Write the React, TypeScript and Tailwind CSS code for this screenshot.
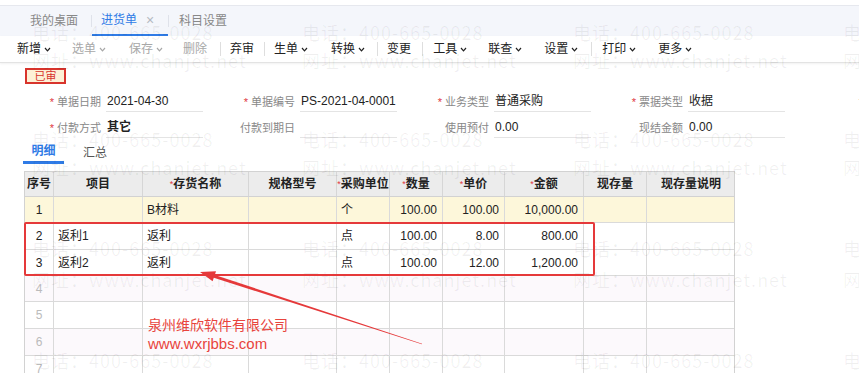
import React from 'react';

const Chevron = () => (
  <svg width="7" height="5" viewBox="0 0 7 5" className="ml-[3px]">
    <polyline points="1,1 3.5,3.8 6,1" fill="none" stroke="currentColor" strokeWidth="1.2" />
  </svg>
);

// toolbar items: label, has chevron, disabled, left margin
const toolbar = [
  { t: '新增', c: true, d: false, ml: 'ml-0' },
  { t: '选单', c: true, d: true, ml: 'ml-[21px]' },
  { t: '保存', c: true, d: true, ml: 'ml-[23px]' },
  { t: '删除', c: false, d: true, ml: 'ml-[20px]' },
  { t: '|', c: false, d: false, ml: 'ml-[13px]' },
  { t: '弃审', c: false, d: false, ml: 'ml-[9px]' },
  { t: '|', c: false, d: false, ml: 'ml-[10px]' },
  { t: '生单', c: true, d: false, ml: 'ml-[9px]' },
  { t: '转换', c: true, d: false, ml: 'ml-[23px]' },
  { t: '|', c: false, d: false, ml: 'ml-[12px]' },
  { t: '变更', c: false, d: false, ml: 'ml-[9px]' },
  { t: '|', c: false, d: false, ml: 'ml-[11px]' },
  { t: '工具', c: true, d: false, ml: 'ml-[10px]' },
  { t: '联查', c: true, d: false, ml: 'ml-[21px]' },
  { t: '设置', c: true, d: false, ml: 'ml-[22px]' },
  { t: '|', c: false, d: false, ml: 'ml-[13px]' },
  { t: '打印', c: true, d: false, ml: 'ml-[10px]' },
  { t: '更多', c: true, d: false, ml: 'ml-[22px]' },
];

const Field = ({ label, value, req, bold }: { label: string; value?: string; req?: boolean; bold?: boolean }) => (
  <div className="flex items-center w-[194px] shrink-0">
    <div className="w-[95px] flex justify-end items-center text-[11px] text-[#888]">
      {req && <span className="text-[#e0383e] mr-[3px] text-[11px]">*</span>}
      {label}
    </div>
    <div className={`ml-[5px] w-[100px] h-[20px] border-b border-[#e4e4e4] pl-[1px] leading-[19px] text-[12px] text-[#222] ${bold ? 'font-semibold' : ''}`}>
      {value}
    </div>
  </div>
);

const cols = [
  { w: 'w-[29px]', h: '序号', r: false },
  { w: 'w-[89px]', h: '项目', r: false },
  { w: 'w-[106px]', h: '存货名称', r: true },
  { w: 'w-[88px]', h: '规格型号', r: false },
  { w: 'w-[53px]', h: '采购单位', r: true },
  { w: 'w-[53px]', h: '数量', r: true },
  { w: 'w-[62px]', h: '单价', r: true },
  { w: 'w-[79px]', h: '金额', r: true },
  { w: 'w-[63px]', h: '现存量', r: false },
  { w: 'w-[88px]', h: '现存量说明', r: false },
];

const rows = [
  { h: 'h-[26px]', bg: 'bg-[#fdf7da]', cells: ['1', '', 'B材料', '', '个', '100.00', '100.00', '10,000.00', '', ''] },
  { h: 'h-[27px]', bg: 'bg-white', cells: ['2', '返利1', '返利', '', '点', '100.00', '8.00', '800.00', '', ''] },
  { h: 'h-[26px]', bg: 'bg-white', cells: ['3', '返利2', '返利', '', '点', '100.00', '12.00', '1,200.00', '', ''] },
  { h: 'h-[26px]', bg: 'bg-[#fcf9fc]', cells: ['4', '', '', '', '', '', '', '', '', ''] },
  { h: 'h-[27px]', bg: 'bg-white', cells: ['5', '', '', '', '', '', '', '', '', ''] },
  { h: 'h-[27px]', bg: 'bg-[#fcf9fc]', cells: ['6', '', '', '', '', '', '', '', '', ''] },
  { h: 'h-[27px]', bg: 'bg-white', cells: ['7', '', '', '', '', '', '', '', '', ''] },
];

const wmTop = [
  { t: 'top-[20px]', b: 'top-[48px]' },
  { t: 'top-[127px]', b: 'top-[155px]' },
  { t: 'top-[236px]', b: 'top-[267px]' },
  { t: 'top-[348px]', b: 'top-[378px]' },
];
const wmLeft = ['left-[32px]', 'left-[302px]', 'left-[573px]', 'left-[843px]'];

export default function App() {
  return (
    <div className="relative w-[859px] h-[373px] overflow-hidden bg-white font-['Liberation_Sans','Noto_Sans_CJK_SC',sans-serif] text-[#333]">
      {/* tab strip */}
      <div className="h-[6px] bg-white border-b border-[#e6e8ee]" />
      <div className="h-[30px] bg-[#f4f6fb] flex items-stretch text-[12px]">
        <div className="w-[91px] flex items-center justify-end pr-[13px] text-[#888]">我的桌面</div>
        <div className="w-px my-[9px] bg-[#dfe2ea]" />
        <div className="w-[76px] flex items-center pl-[9px] text-[#2f7be6] border-b-2 border-[#2f7be6]">
          进货单
          <span className="ml-[9px] text-[#b5b9c2] text-[14px] leading-none">×</span>
        </div>
        <div className="w-px my-[9px] bg-[#dfe2ea]" />
        <div className="flex items-center pl-[10px] text-[#888]">科目设置</div>
      </div>

      {/* toolbar */}
      <div className="h-[27px] flex items-center pl-[17px] text-[12px] border-b border-[#e3e3e3] shadow-[0_1px_2px_rgba(0,0,0,0.06)]">
        {toolbar.map((b, i) =>
          b.t === '|' ? (
            <span key={i} className={`${b.ml} w-px h-[14px] bg-[#dedede]`} />
          ) : (
            <span key={i} className={`${b.ml} flex items-center ${b.d ? 'text-[#a8a8a8]' : 'text-[#222]'}`}>
              {b.t}
              {b.c && <Chevron />}
            </span>
          )
        )}
      </div>

      {/* status stamp */}
      <div className="pl-[25px] pt-[5px]">
        <div className="w-[41px] h-[16px] border-2 border-[#d8342c] bg-[#fdf1d6] text-[#d8342c] text-[11px] leading-[12px] text-center">
          已审
        </div>
      </div>

      {/* header fields */}
      <div className="pl-[9px] pt-[8px] flex text-[12px]">
        <Field req label="单据日期" value="2021-04-30" />
        <Field req label="单据编号" value="PS-2021-04-0001" />
        <Field req label="业务类型" value="普通采购" />
        <Field req label="票据类型" value="收据" />
        <Field req label="供" />
      </div>
      <div className="pl-[9px] pt-[6px] flex text-[12px]">
        <Field req label="付款方式" value="其它" bold />
        <Field label="付款到期日" />
        <Field label="使用预付" value="0.00" />
        <Field label="现结金额" value="0.00" />
      </div>

      {/* detail tabs */}
      <div className="pl-[23px] mt-[3px] flex text-[12px] h-[23px]">
        <div className="w-[41px] flex items-center justify-center text-[#2f7be6] font-bold border-b-[3px] border-[#2f7be6]">明细</div>
        <div className="ml-[19px] flex items-center text-[#555]">汇总</div>
      </div>

      {/* grid */}
      <div className="ml-[24px] mt-[7px] w-[711px] border-l border-r border-[#d2d2d2] text-[12px]">
        <div className="flex h-[26px] bg-[#ececec] border-t border-b border-[#d2d2d2] font-bold text-[#222]">
          {cols.map((c, i) => (
            <div key={i} className={`${c.w} shrink-0 flex items-center justify-center ${i < cols.length - 1 ? 'border-r border-[#d6d6d6]' : ''}`}>
              {c.r && <span className="text-[#e0383e] text-[9px] font-normal self-start mt-[6px]">*</span>}
              {c.h}
            </div>
          ))}
        </div>
        {rows.map((r, ri) => (
          <div key={ri} className={`flex ${r.h} ${r.bg} border-b border-[#dadada]`}>
            {r.cells.map((v, ci) => {
              const num = ci >= 5 && ci <= 7;
              return (
                <div
                  key={ci}
                  className={`${cols[ci].w} shrink-0 flex items-center ${ci === 0 ? 'justify-center' : num ? 'justify-end pr-[5px]' : 'pl-[4px]'} ${ci < cols.length - 1 ? 'border-r border-[#dadada]' : ''} ${ci === 0 && ri > 2 ? 'text-[#bbb]' : 'text-[#222]'}`}
                >
                  {v}
                </div>
              );
            })}
          </div>
        ))}
      </div>

      {/* watermark */}
      <div className="absolute inset-0 pointer-events-none text-[18px] tracking-[1px] text-black/[0.06] font-['Noto_Sans_CJK_SC',sans-serif] leading-[24px]">
        {wmTop.map((r, ri) =>
          wmLeft.map((l, li) => (
            <React.Fragment key={`${ri}-${li}`}>
              <span className={`absolute ${r.t} ${l} whitespace-nowrap`}>电话：400-665-0028</span>
              <span className={`absolute ${r.b} ${l} whitespace-nowrap`}>网址：www.chanjet.net</span>
            </React.Fragment>
          ))
        )}
      </div>

      {/* annotation */}
      <div className="absolute left-[24px] top-[222px] w-[571px] h-[54px] border-2 border-[#e5393a] rounded-[2px]" />
      <svg className="absolute left-0 top-0" width="859" height="373">
        <polygon
          points="200,272 216,271.3 214.8,274.9 422.1,343.7 421.9,344.3 213.8,277.7 212.6,281.3"
          fill="#e5393a"
        />
      </svg>
      <div className="absolute left-[148px] top-[315px] text-[14px] leading-[19px] text-[#e8443d] font-['Noto_Sans_CJK_SC',sans-serif]">
        泉州维欣软件有限公司
        <br />
        <span className="font-['Liberation_Sans',sans-serif] text-[15px]">www.wxrjbbs.com</span>
      </div>
    </div>
  );
}
